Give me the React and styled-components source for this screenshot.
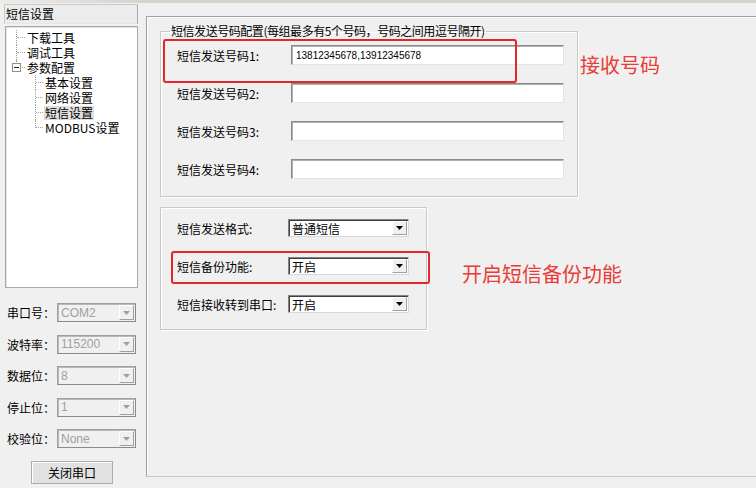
import React from "react";
import styled, { createGlobalStyle } from "styled-components";

const GlobalStyle = createGlobalStyle`
  html, body {
    margin: 0;
    padding: 0;
    background: #f0f0f0;
  }
  body {
    font-family: "Noto Sans CJK SC", "Liberation Sans", sans-serif;
    font-size: 12px;
    color: #000;
  }
  * {
    box-sizing: border-box;
  }
`;

const portFields = [
  { label: "串口号：", value: "COM2" },
  { label: "波特率：", value: "115200" },
  { label: "数据位：", value: "8" },
  { label: "停止位：", value: "1" },
  { label: "校验位：", value: "None" },
];

const phoneRows = [
  { label: "短信发送号码1:", value: "13812345678,13912345678" },
  { label: "短信发送号码2:", value: "" },
  { label: "短信发送号码3:", value: "" },
  { label: "短信发送号码4:", value: "" },
];

const optionRows = [
  { label: "短信发送格式:", value: "普通短信" },
  { label: "短信备份功能:", value: "开启" },
  { label: "短信接收转到串口:", value: "开启" },
];

const Arrow = ({ color = "#000" }) => (
  <svg width="7" height="4" viewBox="0 0 7 4">
    <polygon points="0,0 7,0 3.5,4" fill={color} />
  </svg>
);

const App = () => {
  return (
    <>
      <GlobalStyle />
      <Window>
        <TopStrip />
        <Body>
          <Sidebar>
            <TitleBar>短信设置</TitleBar>
            <Tree>
              <TreeRow $depth={0}>
                <Branch $w={9} />
                <TreeLabel>下载工具</TreeLabel>
              </TreeRow>
              <TreeRow $depth={0}>
                <Branch $w={9} />
                <TreeLabel>调试工具</TreeLabel>
              </TreeRow>
              <TreeRow $depth={0}>
                <Branch $w={9} $last>
                  <Expander>
                    <Minus />
                  </Expander>
                </Branch>
                <TreeLabel>参数配置</TreeLabel>
              </TreeRow>
              <TreeRow $depth={1}>
                <Branch $w={8} />
                <TreeLabel>基本设置</TreeLabel>
              </TreeRow>
              <TreeRow $depth={1}>
                <Branch $w={8} />
                <TreeLabel>网络设置</TreeLabel>
              </TreeRow>
              <TreeRow $depth={1}>
                <Branch $w={8} />
                <TreeLabel $selected>短信设置</TreeLabel>
              </TreeRow>
              <TreeRow $depth={1}>
                <Branch $w={8} $last />
                <TreeLabel>MODBUS设置</TreeLabel>
              </TreeRow>
            </Tree>

            <PortForm>
              {portFields.map((f) => (
                <React.Fragment key={f.label}>
                  <PortLabel>{f.label}</PortLabel>
                  <Combo $width={79} $height={19} $disabled>
                    <ComboText $disabled>{f.value}</ComboText>
                    <DropButton>
                      <Arrow color="#a0a0a0" />
                    </DropButton>
                  </Combo>
                </React.Fragment>
              ))}
            </PortForm>

            <PushButton>关闭串口</PushButton>
          </Sidebar>

          <MainPanel>
            <GroupBox $width={418}>
              <Legend>短信发送号码配置(每组最多有5个号码，号码之间用逗号隔开)</Legend>
              <FieldGrid $labelWidth={114} $gap={18}>
                {phoneRows.map((r) => (
                  <React.Fragment key={r.label}>
                    <FieldLabel>{r.label}</FieldLabel>
                    <TextInput>{r.value}</TextInput>
                  </React.Fragment>
                ))}
              </FieldGrid>
            </GroupBox>

            <GroupBox $width={267} $plain>
              <FieldGrid $labelWidth={111} $gap={20}>
                {optionRows.map((r) => (
                  <React.Fragment key={r.label}>
                    <FieldLabel>{r.label}</FieldLabel>
                    <Combo $width={121} $height={18}>
                      <ComboText>{r.value}</ComboText>
                      <DropButton>
                        <Arrow />
                      </DropButton>
                    </Combo>
                  </React.Fragment>
                ))}
              </FieldGrid>
            </GroupBox>

            <Highlight $left={16} $top={22} $width={354} $height={44} />
            <Note $left={433} $top={35}>接收号码</Note>
            <Highlight $left={24} $top={234} $width={259} $height={33} />
            <Note $left={315} $top={244}>开启短信备份功能</Note>
          </MainPanel>
        </Body>
      </Window>
    </>
  );
};

const Window = styled.div`
  width: 756px;
  height: 488px;
  display: flex;
  flex-direction: column;
  overflow: hidden;
  background: #f0f0f0;
`;

const TopStrip = styled.div`
  flex: none;
  height: 3px;
  background: linear-gradient(to right, #ececec 0, #d6d3cd 140px, #d6d3cd 100%);
`;

const Body = styled.div`
  flex: 1;
  display: flex;
`;

const Sidebar = styled.div`
  flex: none;
  width: 135px;
  margin-left: 4px;
  padding-top: 1px;
  display: flex;
  flex-direction: column;
`;

const TitleBar = styled.div`
  height: 20px;
  width: 134px;
  padding-left: 1px;
  line-height: 18px;
  font-size: 12px;
  background: #ececec;
  border: 1px solid #c9c9c9;
  border-right-color: #a8a8a8;
  border-bottom-color: #e6e6e6;
`;

const Tree = styled.div`
  margin-top: 2px;
  margin-left: 1px;
  width: 133px;
  height: 262px;
  padding-top: 3px;
  background: #fff;
  border: 1px solid #a9a9a9;
  box-shadow: inset 1px 1px 0 #e3e3e3;
`;

const TreeRow = styled.div`
  height: 15px;
  display: flex;
  align-items: center;
  padding-left: ${(p) => (p.$depth === 0 ? 10 : 29)}px;
`;

const Branch = styled.span`
  position: relative;
  flex: none;
  width: ${(p) => p.$w}px;
  height: ${(p) => (p.$last ? "8px" : "15px")};
  align-self: flex-start;
  border-left: 1px dotted #a0a0a0;

  &::after {
    content: "";
    position: absolute;
    left: 0;
    right: 0;
    top: 7px;
    border-top: 1px dotted #a0a0a0;
  }
`;

const Expander = styled.span`
  position: absolute;
  left: -5px;
  top: 3px;
  width: 9px;
  height: 9px;
  background: #fff;
  border: 1px solid #8f8f8f;
  display: flex;
  align-items: center;
  justify-content: center;
  z-index: 1;
`;

const Minus = styled.span`
  width: 5px;
  height: 1px;
  background: #222;
`;

const TreeLabel = styled.span`
  margin-left: 1px;
  padding: 0 1px;
  height: 14px;
  font-size: 12px;
  line-height: 14px;
  white-space: nowrap;
  background: ${(p) => (p.$selected ? "#dedede" : "transparent")};
`;

const PortForm = styled.div`
  margin-top: 15px;
  padding-left: 3px;
  display: grid;
  grid-template-columns: 50px 79px;
  row-gap: 12.5px;
  align-items: center;
`;

const PortLabel = styled.span`
  font-size: 12px;
  white-space: nowrap;
`;

const Combo = styled.div`
  width: ${(p) => p.$width}px;
  height: ${(p) => p.$height}px;
  display: flex;
  align-items: stretch;
  padding: 1px;
  background: ${(p) => (p.$disabled ? "#f0f0f0" : "#fff")};
  border: 1px solid ${(p) => (p.$disabled ? "#a0a0a0" : "#828282")};
  border-right-color: ${(p) => (p.$disabled ? "#8a8a8a" : "#d8d8d8")};
  border-bottom-color: ${(p) => (p.$disabled ? "#8a8a8a" : "#d8d8d8")};
  box-shadow: ${(p) =>
    p.$disabled ? "inset 1px 1px 0 #b8b8b8" : "inset 1px 1px 0 #404040"};
`;

const ComboText = styled.span`
  flex: 1;
  padding-left: 2px;
  display: flex;
  align-items: center;
  font-family: ${(p) =>
    p.$disabled
      ? `"Liberation Sans", "Noto Sans CJK SC", sans-serif`
      : `"Noto Sans CJK SC", "Liberation Sans", sans-serif`};
  font-size: 12px;
  color: ${(p) => (p.$disabled ? "#a0a0a0" : "#000")};
  white-space: nowrap;
  overflow: hidden;
`;

const DropButton = styled.span`
  flex: none;
  width: 15px;
  display: flex;
  align-items: center;
  justify-content: center;
  background: #f0f0f0;
  border: 1px solid #fff;
  border-right-color: #a0a0a0;
  border-bottom-color: #a0a0a0;
`;

const PushButton = styled.button`
  margin-top: 13px;
  margin-left: 27px;
  width: 82px;
  height: 23px;
  padding: 0;
  font-family: "Noto Sans CJK SC", sans-serif;
  font-size: 12px;
  color: #000;
  background: #e1e1e1;
  border: 1px solid #adadad;
  box-shadow: inset 1px 1px 0 #fff;
`;

const MainPanel = styled.div`
  position: relative;
  flex: none;
  width: 620px;
  height: 461px;
  margin-top: 13px;
  margin-left: 7px;
  padding: 7px 0 0 13px;
  border-left: 1px solid #a0a0a0;
  border-top: 1px solid #a0a0a0;
  border-bottom: 1px solid #c8c8c8;
  box-shadow: inset 1px 1px 0 #fff;
  display: flex;
  flex-direction: column;
  align-items: flex-start;
  gap: 10px;
`;

const GroupBox = styled.fieldset`
  margin: 0;
  width: ${(p) => p.$width}px;
  min-width: 0;
  padding: ${(p) => (p.$plain ? "11px 0 16px 16px" : "7px 0 17px 16px")};
  border: 1px solid #c9c9c9;
  box-shadow: 1px 1px 0 #fff, inset 1px 1px 0 #fff;
`;

const Legend = styled.legend`
  margin-left: -7px;
  padding: 0 1px;
  font-size: 12px;
  line-height: 14px;
  letter-spacing: -0.45px;
  white-space: nowrap;
`;

const FieldGrid = styled.div`
  display: grid;
  grid-template-columns: ${(p) => p.$labelWidth}px auto;
  row-gap: ${(p) => p.$gap}px;
  align-items: center;
  justify-items: start;
`;

const FieldLabel = styled.span`
  font-size: 12px;
  white-space: nowrap;
`;

const TextInput = styled.div`
  width: 273px;
  height: 20px;
  padding-left: 4px;
  display: flex;
  align-items: center;
  font-family: "Liberation Sans", sans-serif;
  font-size: 10px;
  background: #fff;
  border: 1px solid #8a8a8a;
  border-right-color: #e3e3e3;
  border-bottom-color: #e3e3e3;
  box-shadow: inset 1px 1px 0 #b0b0b0;
`;

const Highlight = styled.div`
  position: absolute;
  left: ${(p) => p.$left}px;
  top: ${(p) => p.$top}px;
  width: ${(p) => p.$width}px;
  height: ${(p) => p.$height}px;
  border: 2px solid #e5262a;
  border-radius: 3px;
  pointer-events: none;
`;

const Note = styled.div`
  position: absolute;
  left: ${(p) => p.$left}px;
  top: ${(p) => p.$top}px;
  font-size: 20px;
  line-height: 26px;
  color: #e93c38;
  white-space: nowrap;
`;

export default App;
